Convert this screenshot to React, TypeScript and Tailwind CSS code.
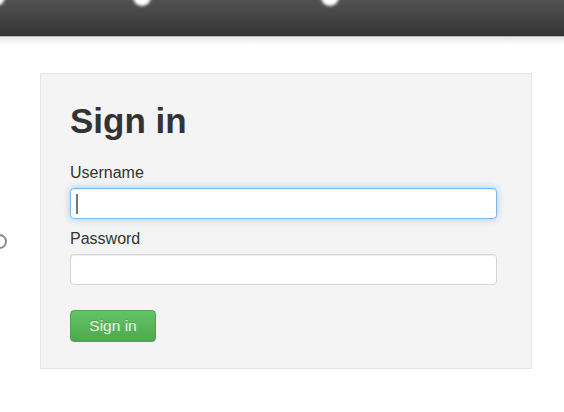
import React from "react";

function Field({ label, focused }: { label: string; focused?: boolean }) {
  return (
    <div className="flex flex-col gap-[5px]">
      <label className="text-[16px] leading-[20px] text-[#333]">{label}</label>
      {focused ? (
        <div className="flex h-[31px] items-center rounded-[4px] border border-[#82b9ec] bg-white pl-[5px] shadow-[0_0_7px_rgba(82,168,236,0.55),inset_0_1px_1px_rgba(0,0,0,0.075)]">
          <div className="h-[20px] w-[2px] bg-[#777]" />
        </div>
      ) : (
        <div className="h-[31px] rounded-[4px] border border-[#d6d6d6] bg-white shadow-[inset_0_1px_1px_rgba(0,0,0,0.075)]" />
      )}
    </div>
  );
}

export default function App() {
  return (
    <div
      className="relative flex h-[412px] w-[564px] flex-col overflow-hidden bg-white"
      style={{ fontFamily: '"Liberation Sans", Arial, sans-serif' }}
    >
      <div className="relative h-[37px] flex-none border-b border-[#b8b8b8] bg-gradient-to-b from-[#525252] to-[#343434]">
        <div className="absolute -left-[13px] -top-[12px] h-[18px] w-[18px] rounded-full bg-white blur-[1.5px]" />
        <div className="absolute left-[133px] -top-[12px] h-[18px] w-[18px] rounded-full bg-white blur-[1.5px]" />
        <div className="absolute left-[321px] -top-[12px] h-[18px] w-[18px] rounded-full bg-white blur-[1.5px]" />
      </div>
      <div className="h-[8px] flex-none bg-gradient-to-b from-[#e6e6e6] to-white" />
      <div className="absolute -left-[8px] top-[234px] h-[15px] w-[15px] rounded-full border-2 border-[#8a8a8a] blur-[0.4px]" />
      <div className="flex pl-[40px] pt-[28px]">
        <div className="flex w-[492px] flex-col border border-[#e6e6e6] bg-[#f4f4f4] pb-[26px] pl-[29px] pr-[34px] pt-[27px]">
          <h1 className="text-[35px] font-bold leading-[40px] text-[#333]">Sign in</h1>
          <div className="mt-[22px] flex flex-col gap-[10px]">
            <Field label="Username" focused />
            <Field label="Password" />
          </div>
          <div className="mt-[25px] flex">
            <button className="flex h-[32px] w-[86px] items-center justify-center rounded-[4px] border border-[#4da64d] bg-gradient-to-b from-[#62c462] to-[#4fa84f] text-[15.5px] text-[#eef8ee] [text-shadow:0_-1px_0_rgba(0,0,0,0.15)]">
              Sign in
            </button>
          </div>
        </div>
      </div>
    </div>
  );
}
